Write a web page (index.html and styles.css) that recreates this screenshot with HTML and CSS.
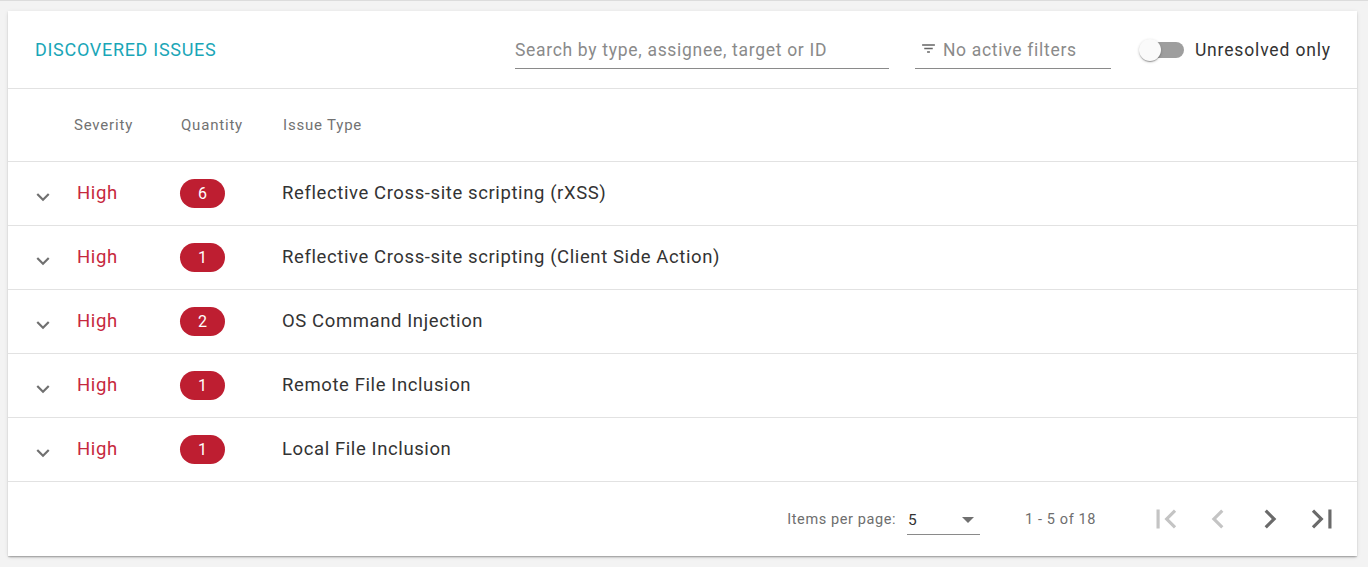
FILE: index.html
```html
<!DOCTYPE html>
<html lang="en">
<head>
<meta charset="utf-8">
<title>Discovered issues</title>
<link rel="stylesheet" href="styles.css">
</head>
<body>
<div class="page">
  <section class="card">
    <header class="card-header">
      <h2 class="title">DISCOVERED ISSUES</h2>
      <div class="tools">
        <div class="field search"><span class="placeholder">Search by type, assignee, target or ID</span></div>
        <div class="field filter">
          <svg class="filter-icon" viewBox="0 0 24 24"><path d="M10 18h4v-2h-4v2zM3 6v2h18V6H3zm3 7h12v-2H6v2z"/></svg>
          <span class="placeholder">No active filters</span>
        </div>
        <label class="toggle">
          <span class="track"><span class="thumb"></span></span>
          <span class="toggle-label">Unresolved only</span>
        </label>
      </div>
    </header>

    <div class="row head-row">
      <span class="c-exp"></span>
      <span class="c-sev">Severity</span>
      <span class="c-qty">Quantity</span>
      <span class="c-type">Issue Type</span>
    </div>

    <div class="row data-row">
      <span class="c-exp"><svg class="chev" viewBox="0 0 24 24"><path d="M16.59 8.59L12 13.17 7.41 8.59 6 10l6 6 6-6z"/></svg></span>
      <span class="c-sev sev-high">High</span>
      <span class="c-qty"><span class="badge">6</span></span>
      <span class="c-type">Reflective Cross-site scripting (rXSS)</span>
    </div>
    <div class="row data-row">
      <span class="c-exp"><svg class="chev" viewBox="0 0 24 24"><path d="M16.59 8.59L12 13.17 7.41 8.59 6 10l6 6 6-6z"/></svg></span>
      <span class="c-sev sev-high">High</span>
      <span class="c-qty"><span class="badge">1</span></span>
      <span class="c-type">Reflective Cross-site scripting (Client Side Action)</span>
    </div>
    <div class="row data-row">
      <span class="c-exp"><svg class="chev" viewBox="0 0 24 24"><path d="M16.59 8.59L12 13.17 7.41 8.59 6 10l6 6 6-6z"/></svg></span>
      <span class="c-sev sev-high">High</span>
      <span class="c-qty"><span class="badge">2</span></span>
      <span class="c-type">OS Command Injection</span>
    </div>
    <div class="row data-row">
      <span class="c-exp"><svg class="chev" viewBox="0 0 24 24"><path d="M16.59 8.59L12 13.17 7.41 8.59 6 10l6 6 6-6z"/></svg></span>
      <span class="c-sev sev-high">High</span>
      <span class="c-qty"><span class="badge">1</span></span>
      <span class="c-type">Remote File Inclusion</span>
    </div>
    <div class="row data-row">
      <span class="c-exp"><svg class="chev" viewBox="0 0 24 24"><path d="M16.59 8.59L12 13.17 7.41 8.59 6 10l6 6 6-6z"/></svg></span>
      <span class="c-sev sev-high">High</span>
      <span class="c-qty"><span class="badge">1</span></span>
      <span class="c-type">Local File Inclusion</span>
    </div>

    <footer class="paginator">
      <span class="per-page-label">Items per page:</span>
      <div class="select">
        <span class="select-value">5</span>
        <span class="select-arrow"></span>
      </div>
      <span class="range">1 - 5 of 18</span>
      <div class="nav">
        <svg class="nav-icon disabled" viewBox="0 0 24 24"><path d="M18.41 16.59L13.82 12l4.59-4.59L17 6l-6 6 6 6zM6 6h2v12H6z"/></svg>
        <svg class="nav-icon disabled" viewBox="0 0 24 24"><path d="M15.41 7.41L14 6l-6 6 6 6 1.41-1.41L10.83 12z"/></svg>
        <svg class="nav-icon" viewBox="0 0 24 24"><path d="M10 6L8.59 7.41 13.17 12l-4.58 4.59L10 18l6-6z"/></svg>
        <svg class="nav-icon" viewBox="0 0 24 24"><path d="M5.59 7.41L10.18 12l-4.59 4.59L7 18l6-6-6-6zM16 6h2v12h-2z"/></svg>
      </div>
    </footer>
  </section>
</div>
</body>
</html>
```

FILE: styles.css
```css
* { box-sizing: border-box; }

html, body {
  margin: 0;
  padding: 0;
  background: #f3f3f3;
  font-family: Roboto, "Liberation Sans", sans-serif;
  color: #333;
}

.page {
  height: 567px;
  border-top: 1px solid #dcdcdc;
  padding: 10px 11px 0 8px;
}

.card {
  background: #fff;
  height: 545px;
  box-shadow: 0 2px 2px -1px rgba(0,0,0,.22), 0 1px 1px rgba(0,0,0,.12), 0 1px 4px rgba(0,0,0,.1);
  display: flex;
  flex-direction: column;
}

.card-header {
  height: 78px;
  border-bottom: 1px solid #e2e2e2;
  display: flex;
  align-items: center;
  padding: 0 26px 0 27px;
}

.title {
  margin: 0;
  font-size: 18px;
  font-weight: 400;
  color: #1aa6b7;
  letter-spacing: 0.7px;
  flex: 1;
}

.tools {
  display: flex;
  align-items: center;
}

.field {
  height: 36px;
  border-bottom: 1px solid #8a8a8a;
  display: flex;
  align-items: center;
  margin-top: 2px;
}

.placeholder {
  color: #8a8a8a;
  font-size: 17.5px;
  letter-spacing: 0.7px;
}

.search {
  width: 374px;
  margin-right: 26px;
}

.filter {
  width: 196px;
  padding-left: 5px;
}

.filter-icon {
  width: 17px;
  height: 17px;
  fill: #666;
  margin-right: 6px;
  margin-top: -4px;
}

.toggle {
  display: flex;
  align-items: center;
  margin-left: 29px;
}

.track {
  position: relative;
  width: 44px;
  height: 16px;
  border-radius: 8px;
  background: #9e9e9e;
  display: block;
}

.thumb {
  position: absolute;
  left: -1px;
  top: -3px;
  width: 22px;
  height: 22px;
  border-radius: 50%;
  background: #fafafa;
  box-shadow: 0 2px 1px -1px rgba(0,0,0,.2), 0 1px 1px rgba(0,0,0,.14), 0 1px 3px rgba(0,0,0,.2);
}

.toggle-label {
  margin-left: 11px;
  font-size: 17.5px;
  letter-spacing: 0.85px;
  color: #333;
}

.row {
  display: flex;
  align-items: center;
  border-bottom: 1px solid #e2e2e2;
}

.head-row {
  height: 73px;
  font-size: 15px;
  letter-spacing: 0.8px;
  color: #727272;
}

.data-row {
  height: 64px;
  font-size: 18.5px;
  letter-spacing: 0.6px;
}

.c-exp {
  width: 66px;
  display: flex;
  align-items: center;
  padding-left: 22px;
}

.c-sev { width: 107px; }
.c-qty { width: 102px; }

.data-row .c-sev { padding-left: 3px; margin-top: -2px; }
.data-row .c-qty { margin-left: -1px; margin-right: 1px; }
.data-row .c-type { margin-left: -1px; margin-top: -2px; }

.chev {
  width: 26px;
  height: 26px;
  fill: #707070;
  margin-top: 6px;
}

.sev-high { color: #c6283d; }

.badge {
  display: inline-flex;
  align-items: center;
  justify-content: center;
  width: 45px;
  height: 29px;
  border-radius: 15px;
  background: #be1e31;
  color: #fff;
  font-size: 16px;
  letter-spacing: 0;
}

.paginator {
  flex: 1;
  display: flex;
  align-items: center;
  justify-content: flex-end;
  padding-right: 16px;
  font-size: 14.5px;
  letter-spacing: 0.6px;
  color: #6e6e6e;
}

.per-page-label {
  margin-right: 11px;
}

.select {
  width: 73px;
  height: 30px;
  border-bottom: 1px solid #8a8a8a;
  display: flex;
  align-items: center;
  justify-content: space-between;
  padding: 0 6px 0 1px;
  margin-top: 2px;
}

.select-value {
  color: #333;
  font-size: 15.5px;
}

.select-arrow {
  width: 0;
  height: 0;
  border-left: 6px solid transparent;
  border-right: 6px solid transparent;
  border-top: 6px solid #707070;
}

.range {
  margin-left: 45px;
  margin-right: 51px;
}

.nav {
  display: flex;
  align-items: center;
  gap: 14px;
}

.nav-icon {
  width: 38px;
  height: 38px;
  fill: #6a6a6a;
}

.nav-icon.disabled { fill: #c4c4c4; }
```
